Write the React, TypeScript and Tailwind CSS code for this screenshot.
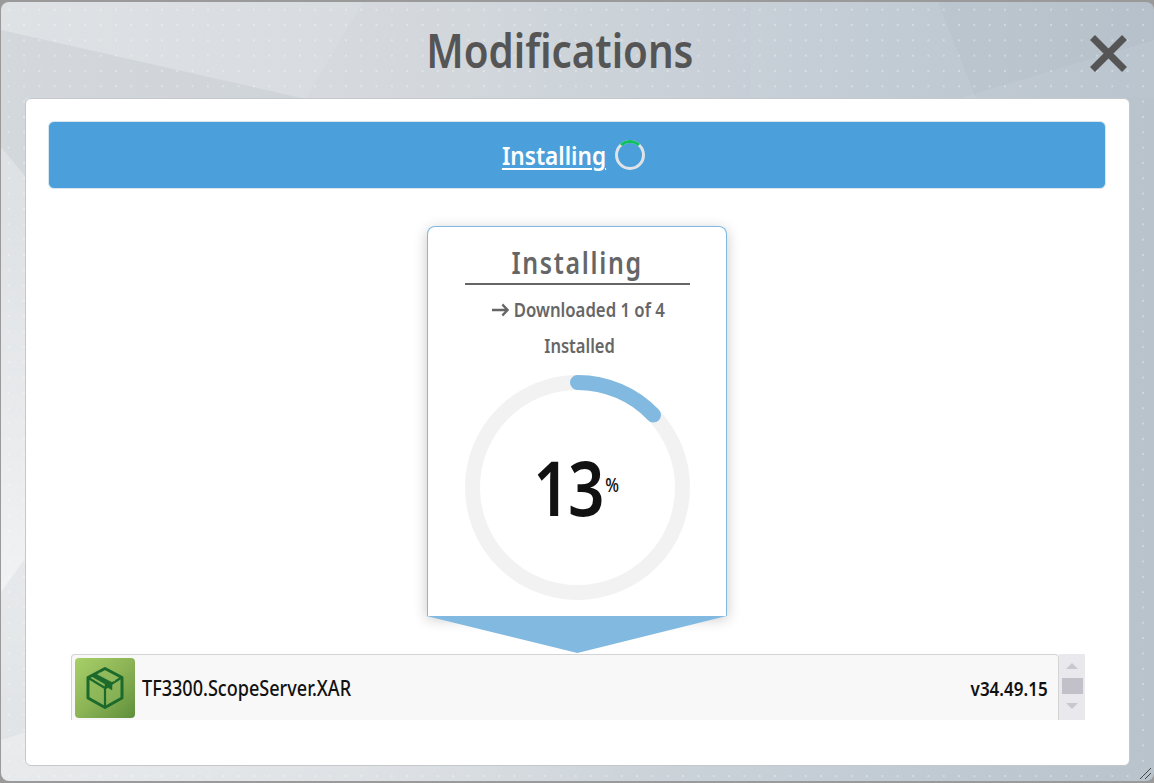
import React from 'react';

const FONT = 'font-["Noto_Sans","Open_Sans",sans-serif]';

// decorative facets of the window background
const Facets = () => (
    <svg className="absolute inset-0 w-full h-full" viewBox="0 0 1153 779" preserveAspectRatio="none">
        <polygon points="0,28 300,96 0,96" fill="#b9c0c6" opacity="0.3" />
        <polygon points="0,96 25,96 25,175 0,145" fill="#b9c0c6" opacity="0.3" />
        <polygon points="362,0 305,96 750,96 750,0" fill="#b9c2c9" opacity="0.08" />
        <polygon points="937,0 975,96 1153,96 1153,0" fill="#aab6c0" opacity="0.18" />
        <polygon points="960,96 1153,38 1153,96" fill="#ffffff" opacity="0.08" />
        <polygon points="0,590 25,555 25,730 0,738" fill="#c8ced3" opacity="0.25" />
    </svg>
);

const PackageIcon = () => (
    <div className="w-[60px] h-[60px] rounded-[4px] bg-gradient-to-br from-[#a8cf68] via-[#8cb455] to-[#5f8f3c] flex items-center justify-center shrink-0">
        <svg width="40" height="44" viewBox="0 0 40 44" fill="none" stroke="#1b6a2c" strokeLinejoin="round">
            <path d="M20 2.5 L37 11.5 V32 L20 41.5 L3 32 V11.5 Z" strokeWidth="3" fill="#8fb95e" fillOpacity="0.5" />
            <path d="M3.5 12 L20 22 L36.5 11.5 M20 22 V41" strokeWidth="2.2" />
            <path d="M10 7.5 L27 16.5 V24 L23 21.5 L20 23 V18 L6 10 Z" fill="#1b6a2c" strokeWidth="0.5" />
            <path d="M14 7 L30 15" stroke="#8fb95e" strokeWidth="1.2" />
        </svg>
    </div>
);

const ProgressRing = () => (
    <div className="relative w-[225px] h-[225px]">
        <svg width="225" height="225" viewBox="0 0 225 225" fill="none">
            <circle cx="112.5" cy="112.5" r="105" stroke="#f2f2f2" strokeWidth="15" />
            <path d="M112.5 7.5 A105 105 0 0 1 188.5 40" stroke="#81b9e0" strokeWidth="15" strokeLinecap="round" />
        </svg>
        <div className="absolute inset-0 flex items-center justify-center text-[#111111] pr-[6px]">
            <span className="text-[75px] font-semibold leading-none scale-x-[0.85] tracking-[-2px] -translate-x-[2px]">13</span>
            <span className="text-[19px] font-medium leading-none -ml-[7px] mt-[-5px] scale-x-[0.85]">%</span>
        </div>
    </div>
);

export default function App() {
    return (
        <div className={`${FONT} w-[1154px] h-[783px] bg-[#9a9a9a] pl-[1px] pt-[2px] overflow-hidden`}>
            <div className="relative w-[1153px] h-[779px] rounded-[8px] overflow-hidden bg-[radial-gradient(ellipse_at_0%_75%,rgba(255,255,255,0.55),transparent_45%),linear-gradient(90deg,#dfe2e5_0%,#d6dbdf_35%,#c5ced6_70%,#b8c3cc_100%)]">
                <Facets />
                <div className="absolute inset-0 bg-[radial-gradient(circle,rgba(255,255,255,0.32)_1px,transparent_1.3px)] bg-[size:15.33px_15.33px]" />

                <div className="relative flex flex-col h-full px-[24px] pb-[15px]">
                    <div className="relative h-[96px] shrink-0 flex items-center justify-center">
                        <h1 className="text-[47px] font-semibold text-[#555555] scale-x-[0.857] leading-none mr-[36px] pt-[1px]">Modifications</h1>
                        <button className="absolute right-[3px] top-[33px] text-[#555555]">
                            <svg width="37" height="37" viewBox="0 0 37 37" fill="none" stroke="currentColor" strokeWidth="7">
                                <path d="M2.5 2.5 L34.5 34.5 M34.5 2.5 L2.5 34.5" />
                            </svg>
                        </button>
                    </div>

                    <div className="flex-1 bg-white rounded-[6px] border border-[#c4c8cb] px-[23px] pt-[22px] flex flex-col">
                        <div className="h-[68px] -ml-[1px] shrink-0 rounded-[6px] bg-[#4ba0db] border border-[#d9e6ef] flex items-center justify-center gap-[9px] text-white pr-[8px]">
                            <span className="pt-[1px] text-[26px] font-semibold underline decoration-2 underline-offset-[3px] scale-x-[0.87] w-[104px] flex justify-center whitespace-nowrap">Installing</span>
                            <svg width="30" height="30" viewBox="0 0 30 30" fill="none" strokeWidth="3">
                                <circle cx="15" cy="15" r="13.5" stroke="#dfe3e6" />
                                <path d="M6 5 A13.5 13.5 0 0 1 24 5" stroke="#10c060" />
                            </svg>
                        </div>

                        <div className="flex justify-center mt-[37px]">
                            <div className="w-[300px] -ml-[2px]">
                                <div className="h-[390px] rounded-t-[8px] border border-[#81b9e0] border-b-0 bg-white shadow-[0_3px_14px_rgba(0,0,0,0.22)] flex flex-col items-center pt-[15px] pl-[2px] text-[#666666]">
                                    <div className="w-[225px] border-b-2 border-[#666666] h-[43px] flex justify-center">
                                        <span className="text-[30px] font-semibold leading-[42px] tracking-[2px] scale-x-[0.83] whitespace-nowrap">Installing</span>
                                    </div>
                                    <div className="mt-[10px] flex items-center gap-[5px] scale-x-[0.88] ml-[1px] text-[19px] font-semibold leading-[30px] whitespace-nowrap">
                                        <svg width="20" height="14" viewBox="0 0 20 14" fill="none" stroke="currentColor" strokeWidth="2.4">
                                            <path d="M0 7 H18 M12 1.5 L18 7 L12 12.5" />
                                        </svg>
                                        <span>Downloaded 1 of 4</span>
                                    </div>
                                    <div className="mt-[6px] ml-[4px] text-[19px] font-semibold leading-[30px] scale-x-[0.87] whitespace-nowrap">Installed</div>
                                    <div className="mt-[14px]">
                                        <ProgressRing />
                                    </div>
                                </div>
                                <div className="h-[37px] bg-[#81b9e0] [clip-path:polygon(0_0,100%_0,50.3%_100%)]" />
                            </div>
                        </div>

                        <div className="flex h-[66px] ml-[22px] mr-[21px] mt-[1px] shrink-0">
                            <div className="flex-1 flex items-center bg-[#f8f8f8] border border-b-0 border-[#d4d4d4] rounded-t-[4px] pl-[3px] pr-[10px]">
                                <PackageIcon />
                                <span className="ml-[7px] pt-[2px] text-[21px] font-medium text-[#111111] scale-x-[0.86] origin-left whitespace-nowrap">TF3300.ScopeServer.XAR</span>
                                <span className="ml-auto pt-[2px] text-[20px] font-semibold text-[#111111] scale-x-[0.85] origin-right whitespace-nowrap">v34.49.15</span>
                            </div>
                            <div className="w-[26px] bg-[#e8e8ed] flex flex-col items-center pt-[9px]">
                                <div className="w-0 h-0 border-x-[6px] border-x-transparent border-b-[6px] border-b-[#c8c8cf]" />
                                <div className="w-[21px] h-[16px] bg-[#c2c1c9] mt-[9px]" />
                                <div className="w-0 h-0 border-x-[6px] border-x-transparent border-t-[6px] border-t-[#c8c8cf] mt-[9px]" />
                            </div>
                        </div>
                    </div>
                </div>

                {/* resize grip */}
                <svg className="absolute right-[2px] bottom-[1px]" width="13" height="13" viewBox="0 0 13 13" stroke="#444444" strokeWidth="1" fill="none">
                    <path d="M1 12 L12 1 M6 12 L12 6" />
                </svg>
            </div>
        </div>
    );
}
